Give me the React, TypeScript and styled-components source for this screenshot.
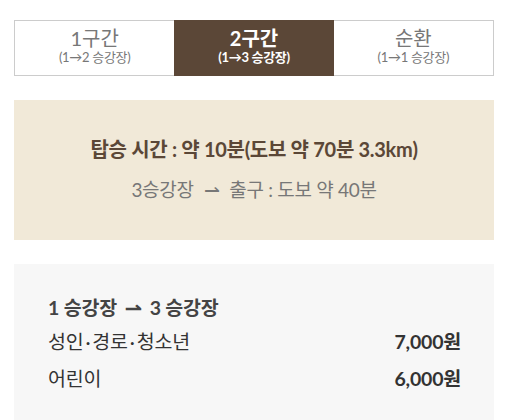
import React from "react";
import styled, { createGlobalStyle } from "styled-components";

const Global = createGlobalStyle`
  html, body { margin: 0; padding: 0; background: #fff; }
  body { font-family: Lato, "Noto Sans CJK KR", sans-serif; }
`;

const Page = styled.div`
  padding: 20px 14px 0;
  display: flex;
  flex-direction: column;
  gap: 24px;
`;

const Tabs = styled.div`
  display: grid;
  grid-template-columns: repeat(3, 1fr);
  border: 1px solid #cccccc;
  height: 54px;
`;

const Tab = styled.div<{ $active?: boolean }>`
  display: flex;
  flex-direction: column;
  align-items: center;
  justify-content: center;
  background: ${(p) => (p.$active ? "#5b4737" : "#fff")};
  color: ${(p) => (p.$active ? "#fff" : "#777")};
  font-weight: ${(p) => (p.$active ? 700 : 400)};
  margin: ${(p) => (p.$active ? "-1px 0" : "0")};
  padding-bottom: 2px;
`;

const TabTitle = styled.div`
  font-size: 20px;
  line-height: 21px;
`;

const TabSub = styled.div`
  font-size: 13px;
  line-height: 17px;
  letter-spacing: -0.3px;
`;

const Info = styled.div`
  background: #f1e9d8;
  height: 140px;
  display: flex;
  flex-direction: column;
  align-items: center;
  justify-content: center;
  gap: 15px;
  padding-bottom: 2px;
  box-sizing: border-box;
`;

const InfoMain = styled.div`
  font-size: 20px;
  line-height: 26px;
  font-weight: 700;
  color: #5b4737;
  letter-spacing: -0.3px;
`;

const InfoSub = styled.div`
  font-size: 19px;
  line-height: 26px;
  color: #777;
  letter-spacing: -0.3px;
`;

const Arrow = styled.span<{ $gap?: number }>`
  margin: 0 ${(p) => p.$gap ?? 10}px;
`;

const Price = styled.div`
  background: #f7f7f7;
  padding: 31px 33px 30px 34px;
  display: flex;
  flex-direction: column;
  gap: 11px;
  height: 156px;
  box-sizing: border-box;
`;

const PriceHead = styled.div`
  font-size: 19.5px;
  font-weight: 700;
  color: #444;
  letter-spacing: -0.2px;
  line-height: 26px;
  margin-bottom: -3px;
`;

const Row = styled.div`
  display: flex;
  justify-content: space-between;
  font-size: 19.5px;
  color: #333;
  line-height: 26px;
  letter-spacing: -0.2px;
`;

const Dot = styled.span`
  margin: 0 2px;
`;

const Amount = styled.span`
  font-weight: 700;
`;

export default function App() {
  return (
    <>
      <Global />
      <Page>
        <Tabs>
          <Tab>
            <TabTitle>1구간</TabTitle>
            <TabSub>(1→2 승강장)</TabSub>
          </Tab>
          <Tab $active>
            <TabTitle>2구간</TabTitle>
            <TabSub>(1→3 승강장)</TabSub>
          </Tab>
          <Tab>
            <TabTitle>순환</TabTitle>
            <TabSub>(1→1 승강장)</TabSub>
          </Tab>
        </Tabs>
        <Info>
          <InfoMain>탑승 시간 : 약 10분(도보 약 70분 3.3km)</InfoMain>
          <InfoSub>
            3승강장<Arrow>⇀</Arrow>출구 : 도보 약 40분
          </InfoSub>
        </Info>
        <Price>
          <PriceHead>
            1 승강장<Arrow $gap={8}>⇀</Arrow>3 승강장
          </PriceHead>
          <Row>
            <span>
              성인<Dot>·</Dot>경로<Dot>·</Dot>청소년
            </span>
            <Amount>7,000원</Amount>
          </Row>
          <Row>
            <span>어린이</span>
            <Amount>6,000원</Amount>
          </Row>
        </Price>
      </Page>
    </>
  );
}
